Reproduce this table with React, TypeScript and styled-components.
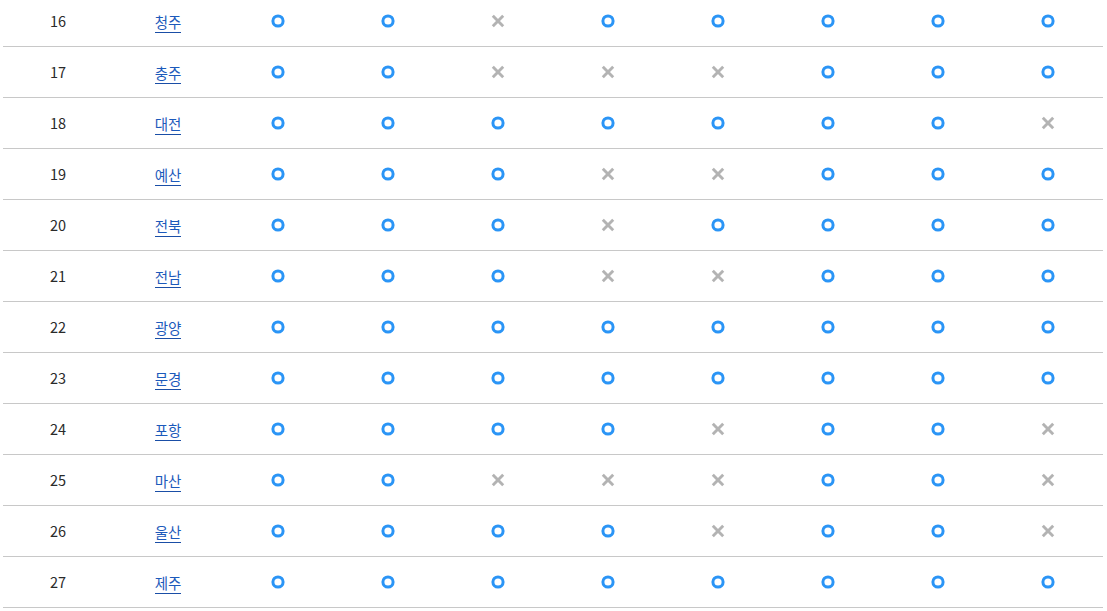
import React from "react";
import styled, { createGlobalStyle } from "styled-components";

const GlobalStyle = createGlobalStyle`
  html, body { margin: 0; padding: 0; background: #fff; }
  body { font-family: "Noto Sans CJK KR", "Noto Sans", sans-serif; }
`;

const Wrapper = styled.div`
  margin: -4px 0 0 3px;
  width: 1100px;
`;

const Table = styled.table`
  width: 1100px;
  border-collapse: collapse;
  table-layout: fixed;
`;

const Row = styled.tr`
  height: 50px;
  border-bottom: 1px solid #c8c8c8;
`;

const Cell = styled.td`
  width: 110px;
  height: 50px;
  padding: 0;
  text-align: center;
  vertical-align: middle;
  font-size: 14.5px;
  color: #2a2a2a;
  line-height: 20px;
`;

const NameLink = styled.a`
  display: inline-block;
  color: #1c5abb;
  text-decoration: none;
  border-bottom: 1px solid #1a4ea6;
  line-height: 19px;
  padding-bottom: 1px;
  margin-top: 2px;
  cursor: pointer;
`;

const IconBox = styled.span`
  display: block;
  width: 14px;
  height: 14px;
  margin: 0 auto;
  line-height: 0;
`;

const Yes = () => (
  <IconBox>
    <svg width="14" height="14" viewBox="0 0 14 14">
      <circle cx="7" cy="7" r="5.1" fill="none" stroke="#2b95f6" strokeWidth="3" />
    </svg>
  </IconBox>
);

const No = () => (
  <IconBox>
    <svg width="14" height="14" viewBox="0 0 14 14">
      <path d="M1.8 1.8 L12.2 12.2 M12.2 1.8 L1.8 12.2" stroke="#b3b3b3" strokeWidth="2.9" strokeLinecap="butt" />
    </svg>
  </IconBox>
);

const rows: [number, string, string][] = [
  [16, "청주", "OOXOOOOO"],
  [17, "충주", "OOXXXOOO"],
  [18, "대전", "OOOOOOOX"],
  [19, "예산", "OOOXXOOO"],
  [20, "전북", "OOOXOOOO"],
  [21, "전남", "OOOXXOOO"],
  [22, "광양", "OOOOOOOO"],
  [23, "문경", "OOOOOOOO"],
  [24, "포항", "OOOOXOOX"],
  [25, "마산", "OOXXXOOX"],
  [26, "울산", "OOOOXOOX"],
  [27, "제주", "OOOOOOOO"],
];

export default function App() {
  return (
    <>
      <GlobalStyle />
      <Wrapper>
        <Table>
          <tbody>
            {rows.map(([n, name, marks]) => (
              <Row key={n}>
                <Cell>{n}</Cell>
                <Cell>
                  <NameLink>{name}</NameLink>
                </Cell>
                {marks.split("").map((m, i) => (
                  <Cell key={i}>{m === "O" ? <Yes /> : <No />}</Cell>
                ))}
              </Row>
            ))}
          </tbody>
        </Table>
      </Wrapper>
    </>
  );
}
